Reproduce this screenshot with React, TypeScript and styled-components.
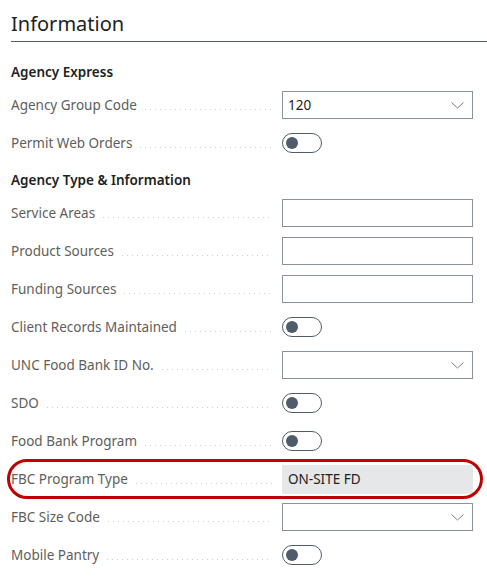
import React from "react";
import styled, { createGlobalStyle } from "styled-components";

const GlobalStyle = createGlobalStyle`
  body {
    margin: 0;
    background: #ffffff;
    font-family: "Segoe UI", "Noto Sans", "Open Sans", sans-serif;
  }
`;

const Page = styled.div`
  padding-left: 11px;
`;

// Section title with the slate rule under it
const Title = styled.h2`
  margin: 0;
  padding: 12px 0 5px;
  font-size: 20px;
  font-weight: 400;
  line-height: 24px;
  color: #212121;
  border-bottom: 1px solid #505c6d;
`;

const Body = styled.div`
  padding-top: 12px;
  width: 462px;
`;

const GroupHeading = styled.div`
  padding: 9px 0 5px;
  font-size: 13.5px;
  font-weight: 600;
  line-height: 18px;
  color: #212121;
`;

const Row = styled.div<{ $highlight?: boolean }>`
  position: relative;
  display: grid;
  grid-template-columns: 271px 191px;
  align-items: center;
  height: 38px;

  ${({ $highlight }) =>
    $highlight &&
    `
    &::after {
      content: "";
      position: absolute;
      top: -1px;
      bottom: -1px;
      left: -4px;
      right: -10px;
      border: 3px solid #c00000;
      border-radius: 20px;
      pointer-events: none;
    }
  `}
`;

const LabelCell = styled.div`
  display: flex;
  align-items: baseline;
  padding-right: 10px;
  min-width: 0;
`;

const Label = styled.span`
  font-size: 13.5px;
  color: #605e5c;
  white-space: nowrap;
`;

// Dotted leader between label and field
const Leader = styled.span`
  flex: 1;
  height: 1px;
  margin-left: 8px;
  background-image: linear-gradient(to right, #cfcdcb 1px, transparent 1px);
  background-size: 5px 1px;
  background-repeat: repeat-x;
`;

const Input = styled.div<{ $readOnly?: boolean }>`
  box-sizing: border-box;
  display: flex;
  align-items: center;
  justify-content: space-between;
  height: ${({ $readOnly }) => ($readOnly ? "29px" : "28px")};
  padding: 0 8px 0 5px;
  border: 1px solid ${({ $readOnly }) => ($readOnly ? "#e6e7e9" : "#8a929c")};
  background: ${({ $readOnly }) => ($readOnly ? "#e6e7e9" : "#ffffff")};
  font-size: 13.5px;
  color: #212121;
`;

const Toggle = styled.div`
  box-sizing: border-box;
  width: 40px;
  height: 20px;
  border: 1px solid #505c6d;
  border-radius: 10px;
  display: flex;
  align-items: center;
  padding-left: 3px;

  &::before {
    content: "";
    width: 12px;
    height: 12px;
    border-radius: 50%;
    background: #505c6d;
  }
`;

const Chevron = () => (
  <svg width="13" height="7" viewBox="0 0 13 7" fill="none">
    <path d="M0.5 0.5 L6.5 6 L12.5 0.5" stroke="#7a7d82" strokeWidth="1" />
  </svg>
);

type Field =
  | { kind: "heading"; text: string }
  | { kind: "text" | "select" | "toggle" | "readonly"; label: string; value?: string; highlight?: boolean };

const fields: Field[] = [
  { kind: "heading", text: "Agency Express" },
  { kind: "select", label: "Agency Group Code", value: "120" },
  { kind: "toggle", label: "Permit Web Orders" },
  { kind: "heading", text: "Agency Type & Information" },
  { kind: "text", label: "Service Areas" },
  { kind: "text", label: "Product Sources" },
  { kind: "text", label: "Funding Sources" },
  { kind: "toggle", label: "Client Records Maintained" },
  { kind: "select", label: "UNC Food Bank ID No." },
  { kind: "toggle", label: "SDO" },
  { kind: "toggle", label: "Food Bank Program" },
  { kind: "readonly", label: "FBC Program Type", value: "ON-SITE FD", highlight: true },
  { kind: "select", label: "FBC Size Code" },
  { kind: "toggle", label: "Mobile Pantry" },
];

const App: React.FC = () => {
  return (
    <>
      <GlobalStyle />
      <Page>
        <Title>Information</Title>
        <Body>
          {fields.map((f, i) => {
            if (f.kind === "heading") {
              return <GroupHeading key={i}>{f.text}</GroupHeading>;
            }
            return (
              <Row key={i} $highlight={f.highlight}>
                <LabelCell>
                  <Label>{f.label}</Label>
                  <Leader />
                </LabelCell>
                {f.kind === "toggle" ? (
                  <Toggle />
                ) : (
                  <Input $readOnly={f.kind === "readonly"}>
                    <span>{f.value}</span>
                    {f.kind === "select" && <Chevron />}
                  </Input>
                )}
              </Row>
            );
          })}
        </Body>
      </Page>
    </>
  );
};

export default App;
